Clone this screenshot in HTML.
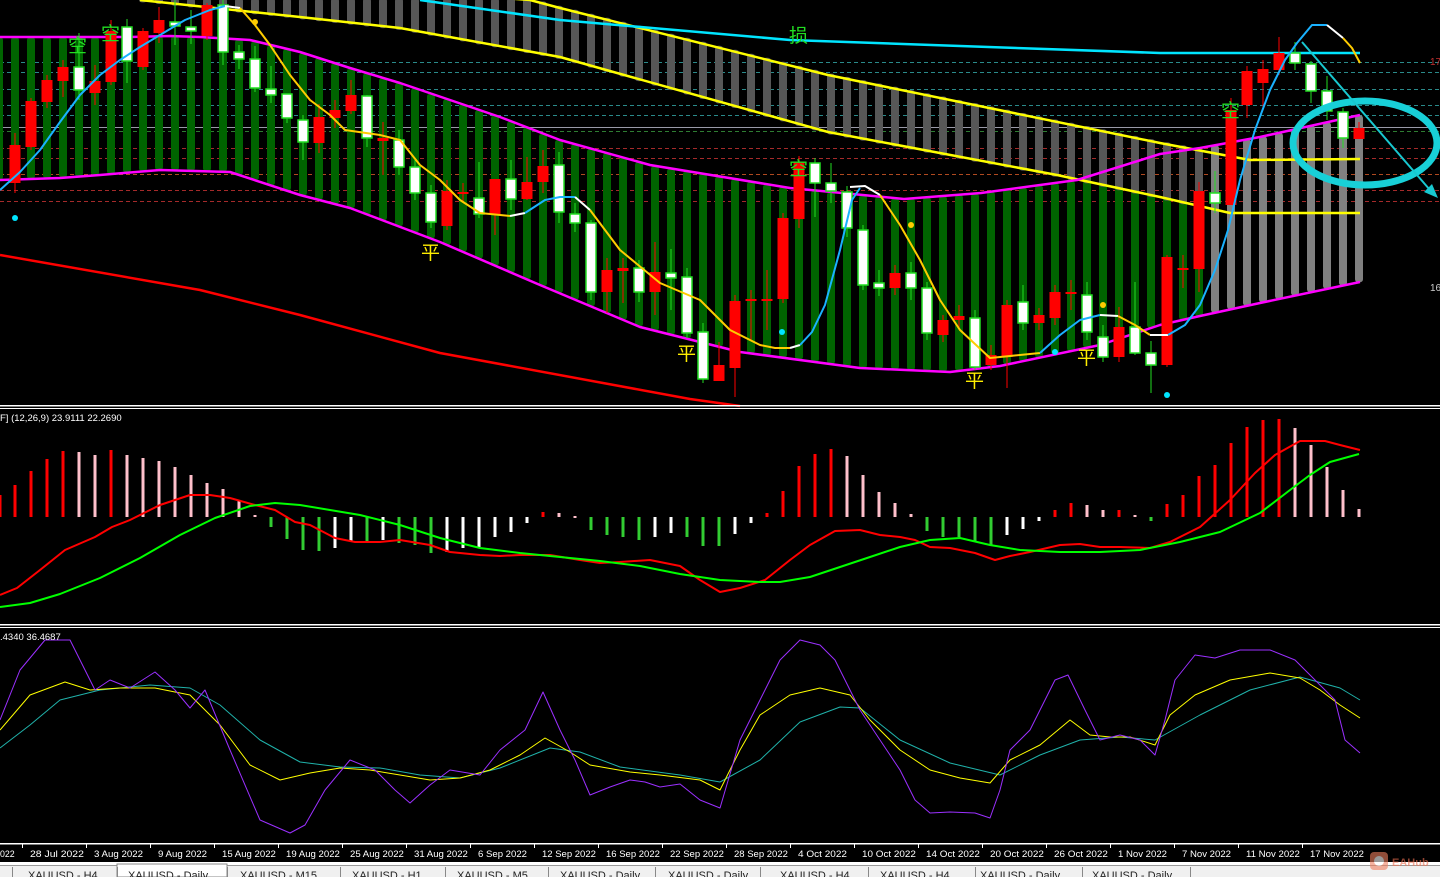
<!DOCTYPE html>
<html><head><meta charset="utf-8">
<style>
html,body{margin:0;padding:0;background:#000;width:1440px;height:877px;overflow:hidden}
svg{display:block}
text{font-family:"Liberation Sans","Noto Sans CJK SC",sans-serif}
</style></head><body>
<svg id="s" width="1440" height="877" xmlns="http://www.w3.org/2000/svg">
<rect width="1440" height="877" fill="#000"/>
<g id="bg"></g>
<!-- Chinese labels -->
<g font-size="19" font-family="'Noto Sans CJK SC',sans-serif">
<text x="68" y="52" fill="#22dd22">空</text>
<text x="101" y="40" fill="#22dd22">空</text>
<text x="789" y="175" fill="#22dd22">空</text>
<text x="1221" y="117" fill="#22dd22">空</text>
<text x="789" y="42" fill="#22dd22">损</text>
<text x="421" y="259" fill="#ffee00">平</text>
<text x="677" y="360" fill="#ffee00">平</text>
<text x="965" y="387" fill="#ffee00">平</text>
<text x="1077" y="364" fill="#ffee00">平</text>
</g>
<text x="1430" y="65" fill="#c03030" font-size="10">17</text>
<text x="1430" y="291" fill="#ccc" font-size="10">16</text>
<!-- separators -->
<rect x="0" y="405" width="1440" height="1.5" fill="#fff"/>
<rect x="0" y="408" width="1440" height="1" fill="#fff"/>
<rect x="0" y="624" width="1440" height="1.5" fill="#fff"/>
<rect x="0" y="627" width="1440" height="1" fill="#fff"/>
<rect x="0" y="843" width="1440" height="1.5" fill="#fff"/>
<text x="0" y="421" fill="#fff" font-size="9.5">F] (12,26,9) 23.9111 22.2690</text>
<text x="0" y="640" fill="#fff" font-size="9.5">.4340 36.4687</text>
<g id="axis" fill="#fff" font-size="9.5"></g>
<!-- bottom bars -->
<rect x="0" y="862" width="1440" height="3" fill="#fff"/>
<rect x="0" y="865" width="1440" height="12" fill="#f0f0f0"/>
<rect x="0" y="865" width="1440" height="1" fill="#999"/>
<g id="tabs" font-size="11" fill="#222"></g>
<g opacity="0.6">
<rect x="1370" y="852" width="18" height="18" rx="4" fill="#f08060"/>
<circle cx="1379" cy="861" r="5" fill="#fff"/>
<text x="1392" y="866" fill="#f07050" font-size="11" font-weight="bold">EAHub</text>
</g>
</svg>
<script>
var NS="http://www.w3.org/2000/svg";
var bg=document.getElementById('bg');
var h='';
function P(p){return 'M'+p.map(function(a){return a[0]+' '+a[1]}).join(' L');}
function I(p,x){if(x<=p[0][0])return p[0][1];for(var i=1;i<p.length;i++){if(x<=p[i][0]){var a=p[i-1],b=p[i];return a[1]+(b[1]-a[1])*(x-a[0])/(b[0]-a[0]);}}return p[p.length-1][1];}
function line(p,c,w){h+='<path d="'+P(p)+'" fill="none" stroke="'+c+'" stroke-width="'+(w||2)+'" stroke-linejoin="round"/>';}
var MU=[[0,37],[60,37],[130,37],[170,36],[200,37],[250,40],[300,52],[350,68],[400,83],[450,100],[500,117],[560,140],[650,165],[790,188],[904,199],[981,193],[1077,180],[1160,154],[1200,148],[1260,137],[1360,115]];
var ML=[[0,180],[60,178],[100,175],[160,170],[230,172],[300,195],[350,208],[440,242],[540,285],[640,327],[740,352],[860,368],[950,372],[1000,366],[1100,345],[1160,325],[1200,316],[1260,303],[1360,282]];
var YB=[[140,0],[300,17],[400,28],[560,57],[828,132],[1057,175],[1160,197],[1230,213],[1360,213]];
var YA=[[0,-40],[530,0],[560,8],[828,75],[1160,143],[1250,160],[1360,159]];
var CY=[[420,0],[560,20],[790,40],[1160,53],[1360,53]];
var RM=[[0,255],[200,290],[300,315],[440,353],[690,399],[740,406]];
// dashed level lines
[[62,'#2a8a8a'],[72,'#2a8a8a'],[89,'#2a8a8a'],[105,'#2a8a8a'],[115,'#2a8a8a'],[131,'#2e7d32'],[148,'#a52a2a'],[158,'#a52a2a'],[174,'#b04a20'],[190,'#a52a2a'],[201,'#a52a2a']].forEach(function(d){h+='<line x1="0" x2="1440" y1="'+(d[0]+.5)+'" y2="'+(d[0]+.5)+'" stroke="'+d[1]+'" stroke-dasharray="4 3"/>';});
h+='<line x1="0" x2="1440" y1="127.5" y2="127.5" stroke="#9a9aa8"/>';
// cloud bars
for(var i=-1;i<85;i++){var x=15+16*i;
 if(x<=1200){var t=I(MU,x),b=I(ML,x);h+='<rect x="'+(x-4)+'" y="'+t+'" width="8" height="'+(b-t)+'" rx="3" fill="#006400"/>';}
 else{var t=I(MU,x),b=I(ML,x);h+='<rect x="'+(x-4)+'" y="'+t+'" width="8" height="'+(b-t)+'" rx="3" fill="#808080"/>';}
 if(x>=143&&x<=1199){var t=Math.max(0,I(YA,x)),b=I(YB,x);if(b>t)h+='<rect x="'+(x-4)+'" y="'+(t-2)+'" width="8" height="'+(b-t+4)+'" rx="3" fill="#575757"/>';}
}
line(RM,'#ff0000',2.5);
line(YB,'#ffff00',2.5);line(YA,'#ffff00',2.5);
line(CY,'#00e5ff',2.5);
line(MU,'#ff00ff',2.5);line(ML,'#ff00ff',2.5);
// candles [x,top,bottom,high,low,type]
var C=[[15,145,183,133,193,'r'],[31,101,147,98,150,'r'],[47,80,102,75,108,'r'],[63,67,81,60,97,'r'],[79,67,90,33,100,'w'],[95,81,93,65,105,'r'],[111,31,82,20,85,'r'],[127,27,61,19,83,'w'],[143,31,67,28,70,'r'],[159,20,33,7,43,'r'],[175,22,26,0,45,'w'],[191,27,31,10,44,'w'],[207,5,36,3,40,'r'],[223,5,52,0,65,'w'],[239,52,59,45,69,'w'],[255,59,88,46,92,'w'],[271,89,95,66,103,'w'],[287,94,118,94,123,'w'],[303,120,142,115,160,'w'],[319,117,143,104,153,'r'],[335,110,118,100,128,'r'],[351,95,111,80,114,'r'],[367,96,138,95,147,'w'],[383,138,141,122,175,'r'],[399,140,167,130,175,'w'],[415,167,193,160,200,'w'],[431,193,222,185,228,'w'],[447,191,226,180,230,'r'],[463,192,194,183,203,'r'],[479,198,214,162,218,'w'],[495,179,214,179,235,'r'],[511,179,199,160,210,'w'],[527,182,199,157,200,'r'],[543,166,182,150,193,'r'],[559,165,212,152,223,'w'],[575,214,223,203,232,'w'],[591,223,292,220,300,'w'],[607,270,292,258,313,'r'],[623,268,271,258,303,'r'],[639,268,292,260,302,'w'],[655,272,292,242,315,'r'],[671,273,278,249,310,'w'],[687,277,333,268,338,'w'],[703,332,379,323,383,'w'],[719,365,381,342,381,'r'],[735,301,368,295,397,'r'],[751,299,301,290,340,'r'],[767,299,301,270,330,'r'],[783,218,299,213,303,'r'],[799,162,219,156,228,'r'],[815,163,183,158,217,'w'],[831,183,191,163,203,'w'],[847,192,228,186,237,'w'],[863,230,285,225,290,'w'],[879,283,288,270,296,'w'],[895,273,288,265,295,'r'],[911,273,288,262,300,'w'],[927,288,333,282,340,'w'],[943,320,335,315,342,'r'],[959,316,320,305,330,'r'],[975,318,367,310,370,'w'],[991,355,365,345,370,'r'],[1007,305,357,300,388,'r'],[1023,302,323,285,330,'w'],[1039,315,323,308,330,'r'],[1055,292,318,285,325,'r'],[1071,292,294,280,310,'r'],[1087,295,332,282,340,'w'],[1103,337,357,325,362,'w'],[1119,327,357,307,362,'r'],[1135,327,353,282,355,'w'],[1151,353,365,341,393,'w'],[1167,257,365,255,367,'r'],[1183,268,270,255,288,'r'],[1199,191,269,182,292,'r'],[1215,193,203,171,213,'w'],[1231,110,205,98,118,'r'],[1247,71,105,66,118,'r'],[1263,69,83,60,107,'r'],[1279,53,70,37,75,'r'],[1295,53,63,42,70,'w'],[1311,64,91,61,103,'w'],[1327,91,111,76,120,'w'],[1343,112,138,108,148,'w'],[1359,128,139,122,139,'r']];
C.forEach(function(c){var x=c[0],col=c[5]=='r'?'#ff0000':'#22dd22';
 h+='<line x1="'+x+'" x2="'+x+'" y1="'+c[3]+'" y2="'+c[4]+'" stroke="'+col+'" stroke-width="1"/>';
 var hh=Math.max(c[2]-c[1],2);
 if(c[5]=='r')h+='<rect x="'+(x-5.5)+'" y="'+c[1]+'" width="11" height="'+hh+'" fill="#ff0000"/>';
 else h+='<rect x="'+(x-5)+'" y="'+c[1]+'" width="10" height="'+hh+'" fill="#fff" stroke="#22dd22" stroke-width="1.5"/>';
});
// MA swing lines
line([[0,190],[20,172],[40,150],[60,122],[80,95],[100,75],[120,60],[140,47],[160,35],[185,20],[210,10],[225,6]],'#1ab2ff',2);
line([[225,6],[240,8]],'#fff',2);
line([[240,8],[255,25],[270,45],[290,75],[310,100],[330,115],[345,130],[380,135],[400,140],[420,165],[440,180],[460,200],[480,213],[510,216]],'#ffcc00',2);
line([[510,216],[525,213]],'#fff',2);
line([[525,213],[545,200],[560,197],[575,197]],'#1ab2ff',2);
line([[575,197],[590,210]],'#fff',2);
line([[590,210],[620,250],[660,283],[700,300],[730,330],[760,345],[775,348],[790,348]],'#ffcc00',2);
line([[790,348],[800,345]],'#fff',2);
line([[800,345],[812,332],[825,305],[840,250],[852,200],[860,188]],'#1ab2ff',2);
line([[850,187],[865,186],[880,195]],'#fff',2);
line([[880,195],[900,225],[920,260],[940,300],[960,330],[990,358],[1010,356],[1040,353]],'#ffcc00',2);
line([[1040,353],[1060,335],[1080,320],[1100,315]],'#1ab2ff',2);
line([[1100,315],[1118,316]],'#fff',2);
line([[1118,316],[1135,325],[1150,335]],'#ffcc00',2);
line([[1150,335],[1168,335]],'#fff',2);
line([[1168,335],[1185,325],[1200,305],[1215,270],[1228,230],[1240,180],[1255,130],[1270,90],[1285,60],[1297,43],[1312,25],[1327,25]],'#1ab2ff',2);
line([[1327,25],[1343,38]],'#fff',2);
line([[1343,38],[1352,48],[1360,63]],'#ffcc00',2);
// dots
[[15,218,'#00e5ff'],[782,332,'#00e5ff'],[1167,395,'#00e5ff'],[1055,352,'#00e5ff'],[255,22,'#ffcc00'],[911,225,'#ffcc00'],[1103,305,'#ffcc00']].forEach(function(d){h+='<circle cx="'+d[0]+'" cy="'+d[1]+'" r="3" fill="'+d[2]+'"/>';});
// ellipse + arrow
h+='<ellipse cx="1365" cy="143" rx="72" ry="42" fill="none" stroke="#18d0d8" stroke-width="7"/>';
h+='<line x1="1302" y1="42" x2="1430" y2="190" stroke="#18c8d0" stroke-width="2"/>';
h+='<path d="M1438 198 L1424 192 L1432 184 Z" fill="#18c8d0"/>';
// MACD histogram
var HB={0:[495,'r'],15:[485,'r'],31:[471,'r'],47:[459,'r'],63:[451,'r'],79:[452,'p'],95:[455,'p'],111:[450,'r'],127:[455,'p'],143:[458,'p'],159:[461,'p'],175:[467,'p'],191:[475,'p'],207:[483,'p'],223:[489,'p'],239:[500,'p'],255:[515,'p'],
271:[527,'g'],287:[539,'g'],303:[550,'g'],319:[551,'g'],335:[548,'w'],351:[541,'w'],367:[542,'g'],383:[540,'w'],399:[543,'g'],415:[545,'g'],431:[553,'g'],447:[552,'w'],463:[548,'w'],479:[547,'w'],495:[537,'w'],511:[532,'w'],527:[523,'w'],543:[512,'r'],559:[513,'p'],575:[516,'p'],591:[530,'g'],607:[535,'g'],623:[537,'g'],639:[540,'g'],655:[537,'w'],671:[533,'w'],687:[537,'g'],703:[546,'g'],719:[546,'g'],735:[534,'w'],751:[523,'w'],767:[513,'r'],783:[491,'r'],799:[466,'r'],815:[454,'r'],831:[449,'r'],847:[456,'p'],863:[475,'p'],879:[492,'p'],895:[503,'p'],911:[514,'p'],927:[531,'g'],943:[537,'g'],959:[537,'g'],975:[541,'g'],991:[545,'g'],1007:[535,'w'],1023:[529,'w'],1039:[521,'w'],1055:[510,'r'],1071:[503,'r'],1087:[505,'p'],1103:[510,'p'],1119:[510,'r'],1135:[515,'p'],1151:[521,'g'],1167:[504,'r'],1183:[495,'r'],1199:[476,'r'],1215:[465,'r'],1231:[443,'r'],1247:[427,'r'],1263:[420,'r'],1279:[419,'r'],1295:[428,'p'],1311:[445,'p'],1327:[467,'p'],1343:[490,'p'],1359:[509,'p']};
var HC={r:'#ff0000',p:'#ffc0cb',g:'#32cd32',w:'#ffffff'};
for(var k in HB){var x=+k,v=HB[k][0],z=517,t=Math.min(v,z),hh=Math.max(Math.abs(v-z),2);h+='<rect x="'+(x-1.5)+'" y="'+t+'" width="3" height="'+hh+'" fill="'+HC[HB[k][1]]+'"/>';}
line([[0,595],[17,588],[40,570],[65,550],[95,537],[112,527],[130,520],[160,505],[190,495],[210,495],[230,498],[255,505],[275,510],[295,522],[310,525],[335,538],[355,542],[380,542],[400,540],[430,545],[450,552],[480,555],[500,556],[520,555],[550,555],[580,560],[600,563],[620,562],[650,560],[680,566],[700,580],[720,592],[740,588],[765,580],[790,560],[810,545],[835,531],[860,530],[880,535],[900,537],[915,540],[930,547],[950,548],[975,553],[995,560],[1010,556],[1030,552],[1060,545],[1080,544],[1100,547],[1120,547],[1150,548],[1170,542],[1200,527],[1230,500],[1255,473],[1275,455],[1300,441],[1325,441],[1340,445],[1360,450]],'#ff0000',2);
line([[0,607],[30,603],[60,594],[100,578],[140,558],[180,535],[215,518],[250,506],[275,503],[300,505],[330,510],[360,515],[400,525],[440,538],[480,548],[520,553],[560,557],[600,561],[640,566],[680,574],[720,580],[760,582],[780,582],[810,577],[840,567],[870,557],[900,547],[930,540],[960,538],[990,545],[1020,550],[1060,552],[1100,552],[1140,550],[1180,542],[1220,532],[1260,513],[1290,490],[1310,475],[1330,462],[1359,454]],'#00ff00',2);
// oscillator
line([[0,748],[30,725],[60,700],[100,690],[150,685],[190,688],[220,705],[260,740],[300,762],[340,767],[380,768],[420,775],[460,778],[500,768],[550,748],[580,752],[620,767],[680,775],[720,782],[760,760],[800,722],[840,707],[860,708],[900,740],[950,763],[1000,775],[1040,755],[1080,740],[1120,737],[1155,740],[1200,715],[1250,690],[1300,677],[1340,688],[1360,700]],'#20b2aa',1);
line([[0,730],[30,695],[65,682],[90,690],[120,688],[155,688],[190,695],[220,725],[250,765],[280,780],[310,773],[340,768],[370,770],[400,775],[430,780],[460,778],[490,770],[520,755],[545,738],[570,752],[590,765],[630,772],[660,775],[700,780],[720,790],[740,750],[760,715],[790,695],[820,688],[850,695],[870,720],[900,750],[930,770],[960,778],[990,783],[1010,760],[1040,745],[1070,720],[1090,735],[1110,737],[1130,737],[1155,745],[1170,715],[1195,695],[1230,680],[1270,673],[1300,678],[1320,690],[1340,705],[1360,718]],'#ffff00',1);
line([[0,720],[20,670],[45,640],[70,640],[95,690],[110,680],[130,688],[155,672],[175,690],[190,708],[205,690],[230,750],[260,820],[290,833],[305,825],[325,790],[350,760],[375,770],[395,790],[410,803],[430,785],[450,770],[480,775],[500,750],[525,730],[543,692],[560,730],[575,760],[590,795],[610,787],[630,780],[645,782],[660,787],[680,784],[700,800],[720,808],[740,740],[760,700],[780,660],[800,640],[820,645],[835,660],[860,710],[880,740],[900,770],[915,800],[930,813],[950,812],[975,813],[990,818],[1000,790],[1010,750],[1030,730],[1055,680],[1068,675],[1085,710],[1100,740],[1120,735],[1140,740],[1155,755],[1165,720],[1175,680],[1195,655],[1215,658],[1240,650],[1270,650],[1295,660],[1315,680],[1335,700],[1345,740],[1360,753]],'#9b30ff',1);
bg.innerHTML=h;
// axis
var ax='',D=[[0,'022'],[30,'28 Jul 2022'],[94,'3 Aug 2022'],[158,'9 Aug 2022'],[222,'15 Aug 2022'],[286,'19 Aug 2022'],[350,'25 Aug 2022'],[414,'31 Aug 2022'],[478,'6 Sep 2022'],[542,'12 Sep 2022'],[606,'16 Sep 2022'],[670,'22 Sep 2022'],[734,'28 Sep 2022'],[798,'4 Oct 2022'],[862,'10 Oct 2022'],[926,'14 Oct 2022'],[990,'20 Oct 2022'],[1054,'26 Oct 2022'],[1118,'1 Nov 2022'],[1182,'7 Nov 2022'],[1246,'11 Nov 2022'],[1310,'17 Nov 2022']];
D.forEach(function(d){ax+='<text x="'+d[0]+'" y="857" textLength="'+(d[1].length*4.9)+'" lengthAdjust="spacingAndGlyphs">'+d[1]+'</text>';if(d[0]>0)ax+='<rect x="'+(d[0]-8)+'" y="844" width="1" height="4"/>';});
document.getElementById('axis').innerHTML=ax;
var tb='',T=[[0,'x'],[28,'XAUUSD - H4'],[128,'XAUUSD - Daily'],[240,'XAUUSD - M15'],[352,'XAUUSD - H1'],[457,'XAUUSD - M5'],[560,'XAUUSD - Daily'],[668,'XAUUSD - Daily'],[780,'XAUUSD - H4'],[880,'XAUUSD - H4'],[980,'XAUUSD - Daily'],[1092,'XAUUSD - Daily']];
tb+='<rect x="117" y="864" width="110" height="13" fill="#fff" stroke="#888"/>';
T.forEach(function(t,i){if(i>0)tb+='<text x="'+t[0]+'" y="879">'+t[1]+'</text>';});
[12,117,227,340,445,548,655,760,868,975,1082,1190].forEach(function(x){tb+='<rect x="'+x+'" y="867" width="1" height="10" fill="#888"/>';});
document.getElementById('tabs').innerHTML=tb;
</script>
</body></html>
